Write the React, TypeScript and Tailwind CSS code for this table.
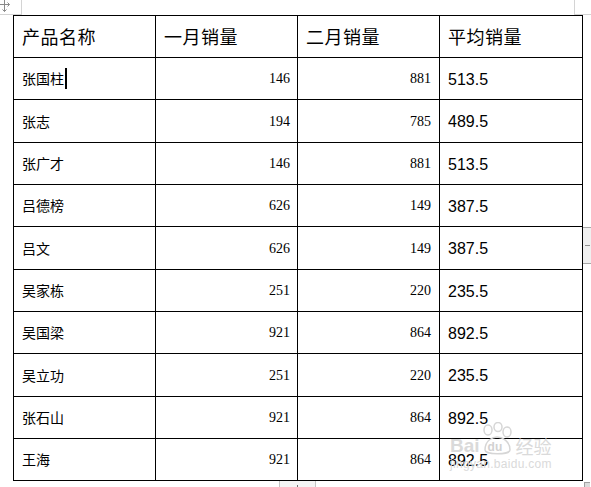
import React from "react";

const rows = [
  ["张国柱", "146", "881", "513.5"],
  ["张志", "194", "785", "489.5"],
  ["张广才", "146", "881", "513.5"],
  ["吕德榜", "626", "149", "387.5"],
  ["吕文", "626", "149", "387.5"],
  ["吴家栋", "251", "220", "235.5"],
  ["吴国梁", "921", "864", "892.5"],
  ["吴立功", "251", "220", "235.5"],
  ["张石山", "921", "864", "892.5"],
  ["王海", "921", "864", "892.5"],
];

const cjk = { fontFamily: '"Noto Sans CJK SC", sans-serif' };
const num = { fontFamily: '"Liberation Serif", serif' };
const avg = { fontFamily: '"Liberation Sans", sans-serif' };

export default function App() {
  return (
    <div className="relative w-[591px] h-[487px] overflow-hidden bg-white text-black">
      {/* move handle */}
      <div className="absolute left-0 top-0 w-[22px] h-[15px] border-r border-b border-[#d4d4d4]">
        <svg width="14" height="14" viewBox="0 0 14 14" className="absolute -left-[1px] -top-[1px]" fill="none" stroke="#8a8a8a" strokeWidth="1">
          <path d="M5.5 0.5 V12.5 M0 5.5 H10.5" />
          <path d="M8.5 3.5 L10.5 5.5 L8.5 7.5" />
          <path d="M3.5 10.5 L5.5 12.5 L7.5 10.5" />
        </svg>
      </div>
      {/* top right corner */}
      <div className="absolute left-[574px] top-0 w-[17px] h-[15px] border-l border-b border-[#d4d4d4]" />
      {/* right row marker */}
      <div className="absolute left-[583px] top-[227px] w-[8px] h-[37px] bg-[#f0f0f0] border-t border-b border-[#a8a8a8] flex items-center justify-center">
        <div className="w-[5px] h-[1px] bg-[#909090]" />
      </div>
      {/* bottom column marker */}
      <div className="absolute left-[279px] top-[481px] w-[37px] h-[6px] bg-[#f4f4f4] border-l border-r border-[#c4c4c4] flex items-end justify-center">
        <div className="w-[1px] h-[2px] bg-[#707070]" />
      </div>
      {/* bottom right resize */}
      <div className="absolute left-[584px] top-[482px] w-[6px] h-[5px] border-l border-t border-[#a0a0a0] bg-[#dcdcdc]" />

      <div className="pl-[13px] pt-[15px]">
        <div className="grid grid-cols-[142px_142px_142px_143px] grid-rows-[42px_42px_43px_42px_42px_43px_42px_42px_43px_42px_42px] border-l border-t border-black w-fit">
          {["产品名称", "一月销量", "二月销量", "平均销量"].map((h) => (
            <div key={h} className="flex items-center pl-2 border-r border-b border-black text-[18px] tracking-[0.5px]" style={cjk}>
              {h}
            </div>
          ))}
          {rows.map((r, i) => (
            <React.Fragment key={i}>
              <div className="flex items-center pl-2 border-r border-b border-black text-[14px]" style={cjk}>
                {r[0]}
                {i === 0 && <span className="ml-[1px] inline-block w-[2px] h-[21px] bg-black" />}
              </div>
              <div className="flex items-center justify-end pr-[7px] border-r border-b border-black text-[14px]" style={num}>
                {r[1]}
              </div>
              <div className="flex items-center justify-end pr-2 border-r border-b border-black text-[14px]" style={num}>
                {r[2]}
              </div>
              <div className="flex items-center pl-2 pt-[2px] border-r border-b border-black text-[16px]" style={avg}>
                {r[3]}
              </div>
            </React.Fragment>
          ))}
        </div>
      </div>

      {/* watermark */}
      <div className="absolute left-[450px] top-[422px] flex flex-col pointer-events-none select-none">
        <div className="flex items-end h-[34px]">
          <span className="text-[19px] font-bold text-[#dadada] leading-none mb-[1px]" style={avg}>Bai</span>
          <div className="relative w-[36px] h-[34px] -ml-[1px]">
            <svg width="36" height="34" viewBox="0 0 36 34" fill="none" stroke="#d6d6d6" strokeWidth="1.5">
              <ellipse cx="9" cy="8" rx="4" ry="5" />
              <ellipse cx="19" cy="5" rx="4" ry="4.5" />
              <ellipse cx="28" cy="10" rx="4" ry="5" />
              <path d="M6 28 C6 18 14 15 18 15 C23 15 31 19 31 28 C31 33 6 33 6 28 Z" />
            </svg>
            <span className="absolute left-[9px] top-[19px] text-[12px] font-bold text-[#d2d2d2] leading-none" style={avg}>du</span>
          </div>
          <span className="ml-[1px] text-[18px] text-[#dadada] leading-none mb-[1px]" style={cjk}>经验</span>
        </div>
        <span className="mt-[2px] text-[12px] text-[#dadada] leading-none tracking-[0.3px]" style={avg}>jingyan.baidu.com</span>
      </div>
    </div>
  );
}
